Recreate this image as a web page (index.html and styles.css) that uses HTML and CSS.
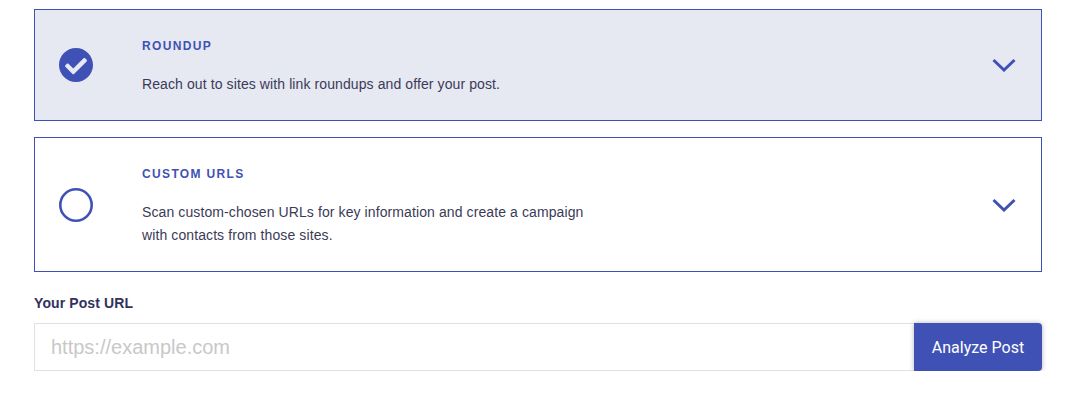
FILE: index.html
```html
<!DOCTYPE html>
<html lang="en">
<head>
  <meta charset="UTF-8">
  <title>New Campaign</title>
  <link rel="stylesheet" href="styles.css">
</head>
<body>
  <div class="container">
    <div class="option selected">
      <svg class="option-check" viewBox="8 8 496 496">
        <path fill="#3f51b5" d="M504 256c0 136.967-111.033 248-248 248S8 392.967 8 256 119.033 8 256 8s248 111.033 248 248zM227.314 387.314l184-184c6.248-6.248 6.248-16.379 0-22.627l-22.627-22.627c-6.248-6.249-16.379-6.249-22.628 0L216 308.118l-70.059-70.059c-6.248-6.248-16.379-6.248-22.628 0l-22.627 22.627c-6.248 6.248-6.248 16.379 0 22.627l104 104c6.249 6.249 16.379 6.249 22.628.001z"/>
      </svg>
      <div class="option-text">
        <h3>ROUNDUP</h3>
        <p>Reach out to sites with link roundups and offer your post.</p>
      </div>
      <svg class="option-arrow" viewBox="0 0 24 14">
        <path d="M1.5 2l10.5 10 10.500-10" fill="none" stroke="#3f51b5" stroke-width="3"/>
      </svg>
    </div>

    <div class="option">
      <svg class="option-check" viewBox="0 0 34 34">
        <circle cx="17" cy="17" r="15.700" fill="none" stroke="#3f51b5" stroke-width="2.600"/>
      </svg>
      <div class="option-text">
        <h3>CUSTOM URLS</h3>
        <p>Scan custom-chosen URLs for key information and create a campaign<br>with contacts from those sites.</p>
      </div>
      <svg class="option-arrow" viewBox="0 0 24 14">
        <path d="M1.5 2l10.5 10 10.500-10" fill="none" stroke="#3f51b5" stroke-width="3"/>
      </svg>
    </div>

    <label class="url-label" for="post-url">Your Post URL</label>
    <div class="url-row">
      <input type="text" id="post-url" placeholder="https://example.com">
      <button type="button">Analyze Post</button>
    </div>
  </div>
</body>
</html>
```

FILE: styles.css
```css
body {
  margin: 0;
  background-color: white;
  font-family: "Liberation Sans", Arial, sans-serif;
  color: #32325d;
}
.container {
  padding: 9px 29px 0 34px;
}
.option {
  display: flex;
  align-items: center;
  padding: 24px 25px 24px 24px;
  border: 1px solid #3f51b5;
  margin-bottom: 16px;
}
.option.selected {
  background-color: #e6e8f2;
}
.option-check {
  width: 34px;
  height: 34px;
  flex: none;
}
.option-text {
  flex: 1;
  margin-left: 49px;
  padding-top: 2px;
}
.option-text h3 {
  margin: 0 0 17px 0;
  font-size: 12px;
  line-height: 20px;
  font-weight: bold;
  letter-spacing: 1.35px;
  color: #3f51b5;
}
.option-text p {
  margin: 0;
  font-size: 14px;
  line-height: 23px;
  letter-spacing: 0.1px;
  color: #3b3b58;
}
.option-arrow {
  width: 24px;
  height: 14px;
  flex: none;
}
.url-label {
  display: block;
  margin-top: 21px;
  margin-bottom: 10px;
  font-size: 14px;
  line-height: 20px;
  font-weight: bold;
  letter-spacing: 0.1px;
}
.url-row {
  display: flex;
  height: 48px;
}
.url-row input {
  flex: 1;
  min-width: 0;
  padding: 0 16px;
  border: 1px solid #e1e1e1;
  border-right: none;
  font-family: "Liberation Sans", Arial, sans-serif;
  font-size: 20px;
  outline: none;
}
.url-row input::placeholder {
  color: #c8c8c8;
}
.url-row button {
  width: 128px;
  border: none;
  border-radius: 0 4px 4px 0;
  background-color: #3f51b5;
  box-shadow: 0 0 5px rgba(0,0,0,0.3);
  color: white;
  font-family: Roboto, sans-serif;
  font-size: 16px;
  font-weight: 400;
  cursor: pointer;
}
```
